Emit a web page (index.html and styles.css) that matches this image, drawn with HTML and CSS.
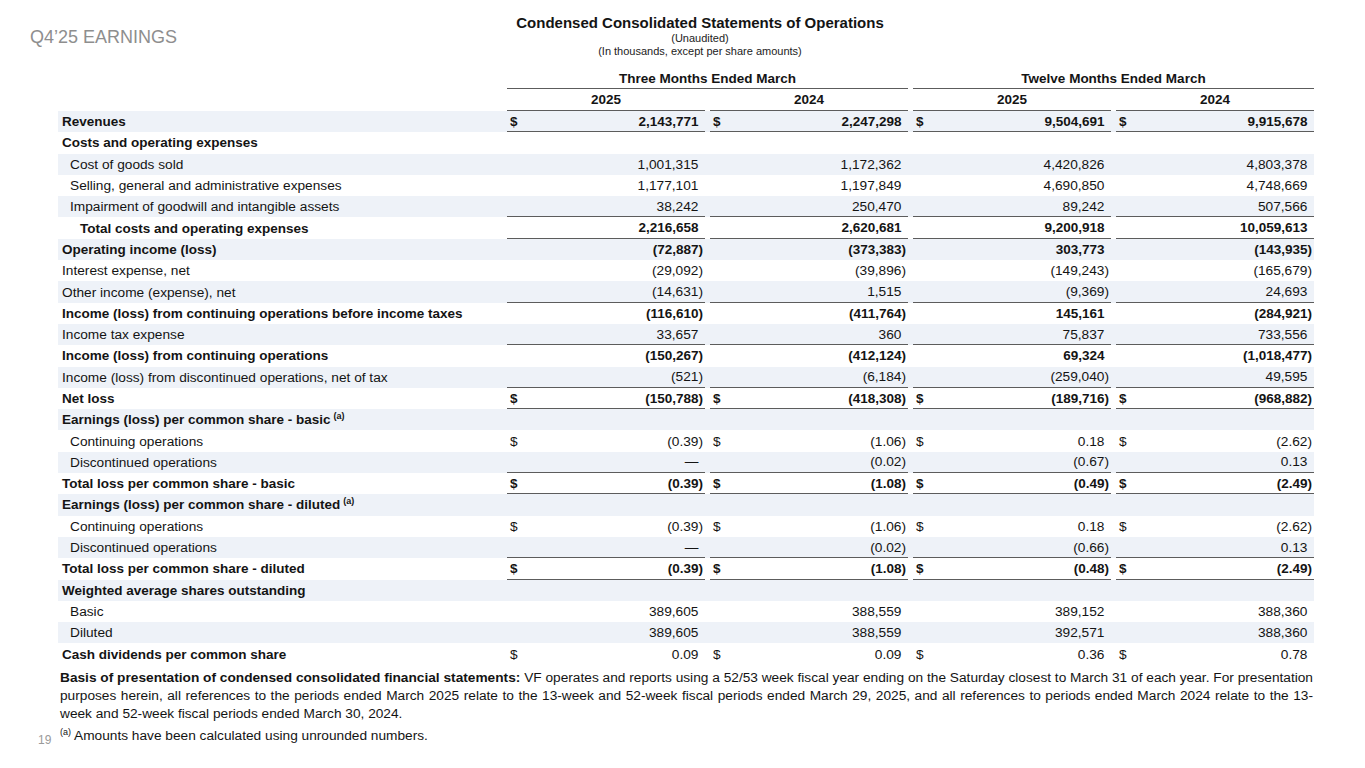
FILE: index.html
```html
<!DOCTYPE html>
<html lang="en">
<head>
<meta charset="utf-8">
<title>Q4'25 Earnings - Condensed Consolidated Statements of Operations</title>
<link rel="stylesheet" href="styles.css">
</head>
<body>
<div class="slide">
  <header class="top">
    <div class="brand">Q4’25 EARNINGS</div>
    <div class="titles">
      <div class="title">Condensed Consolidated Statements of Operations</div>
      <div class="sub">(Unaudited)</div>
      <div class="sub">(In thousands, except per share amounts)</div>
    </div>
    <div></div>
  </header>

  <section class="statement">
    <div class="ghead">
      <div></div>
      <div class="gcell">Three Months Ended March</div>
      <div class="gcell">Twelve Months Ended March</div>
    </div>
    <div class="yhead">
      <div></div>
      <div class="ycell">2025</div>
      <div class="ycell">2024</div>
      <div class="ycell">2025</div>
      <div class="ycell">2024</div>
    </div>

    <div class="row shade b">
      <div class="lab">Revenues</div>
      <div class="val rule"><span class="cur">$</span><span class="num pos">2,143,771</span></div>
      <div class="val rule"><span class="cur">$</span><span class="num pos">2,247,298</span></div>
      <div class="val rule"><span class="cur">$</span><span class="num pos">9,504,691</span></div>
      <div class="val rule"><span class="cur">$</span><span class="num pos">9,915,678</span></div>
    </div>
    <div class="row b">
      <div class="lab">Costs and operating expenses</div>
      <div class="val"></div><div class="val"></div><div class="val"></div><div class="val"></div>
    </div>
    <div class="row shade">
      <div class="lab i1">Cost of goods sold</div>
      <div class="val"><span class="num pos">1,001,315</span></div>
      <div class="val"><span class="num pos">1,172,362</span></div>
      <div class="val"><span class="num pos">4,420,826</span></div>
      <div class="val"><span class="num pos">4,803,378</span></div>
    </div>
    <div class="row">
      <div class="lab i1">Selling, general and administrative expenses</div>
      <div class="val"><span class="num pos">1,177,101</span></div>
      <div class="val"><span class="num pos">1,197,849</span></div>
      <div class="val"><span class="num pos">4,690,850</span></div>
      <div class="val"><span class="num pos">4,748,669</span></div>
    </div>
    <div class="row shade">
      <div class="lab i1">Impairment of goodwill and intangible assets</div>
      <div class="val rule"><span class="num pos">38,242</span></div>
      <div class="val rule"><span class="num pos">250,470</span></div>
      <div class="val rule"><span class="num pos">89,242</span></div>
      <div class="val rule"><span class="num pos">507,566</span></div>
    </div>
    <div class="row b">
      <div class="lab i2">Total costs and operating expenses</div>
      <div class="val rule"><span class="num pos">2,216,658</span></div>
      <div class="val rule"><span class="num pos">2,620,681</span></div>
      <div class="val rule"><span class="num pos">9,200,918</span></div>
      <div class="val rule"><span class="num pos">10,059,613</span></div>
    </div>
    <div class="row shade b">
      <div class="lab">Operating income (loss)</div>
      <div class="val"><span class="num">(72,887)</span></div>
      <div class="val"><span class="num">(373,383)</span></div>
      <div class="val"><span class="num pos">303,773</span></div>
      <div class="val"><span class="num">(143,935)</span></div>
    </div>
    <div class="row">
      <div class="lab">Interest expense, net</div>
      <div class="val"><span class="num">(29,092)</span></div>
      <div class="val"><span class="num">(39,896)</span></div>
      <div class="val"><span class="num">(149,243)</span></div>
      <div class="val"><span class="num">(165,679)</span></div>
    </div>
    <div class="row shade">
      <div class="lab">Other income (expense), net</div>
      <div class="val rule"><span class="num">(14,631)</span></div>
      <div class="val rule"><span class="num pos">1,515</span></div>
      <div class="val rule"><span class="num">(9,369)</span></div>
      <div class="val rule"><span class="num pos">24,693</span></div>
    </div>
    <div class="row b">
      <div class="lab">Income (loss) from continuing operations before income taxes</div>
      <div class="val"><span class="num">(116,610)</span></div>
      <div class="val"><span class="num">(411,764)</span></div>
      <div class="val"><span class="num pos">145,161</span></div>
      <div class="val"><span class="num">(284,921)</span></div>
    </div>
    <div class="row shade">
      <div class="lab">Income tax expense</div>
      <div class="val rule"><span class="num pos">33,657</span></div>
      <div class="val rule"><span class="num pos">360</span></div>
      <div class="val rule"><span class="num pos">75,837</span></div>
      <div class="val rule"><span class="num pos">733,556</span></div>
    </div>
    <div class="row b">
      <div class="lab">Income (loss) from continuing operations</div>
      <div class="val"><span class="num">(150,267)</span></div>
      <div class="val"><span class="num">(412,124)</span></div>
      <div class="val"><span class="num pos">69,324</span></div>
      <div class="val"><span class="num">(1,018,477)</span></div>
    </div>
    <div class="row shade">
      <div class="lab">Income (loss) from discontinued operations, net of tax</div>
      <div class="val rule"><span class="num">(521)</span></div>
      <div class="val rule"><span class="num">(6,184)</span></div>
      <div class="val rule"><span class="num">(259,040)</span></div>
      <div class="val rule"><span class="num pos">49,595</span></div>
    </div>
    <div class="row b">
      <div class="lab">Net loss</div>
      <div class="val rule"><span class="cur">$</span><span class="num">(150,788)</span></div>
      <div class="val rule"><span class="cur">$</span><span class="num">(418,308)</span></div>
      <div class="val rule"><span class="cur">$</span><span class="num">(189,716)</span></div>
      <div class="val rule"><span class="cur">$</span><span class="num">(968,882)</span></div>
    </div>
    <div class="row shade b">
      <div class="lab"><span>Earnings (loss) per common share - basic</span><sup class="fn">(a)</sup></div>
      <div class="val"></div><div class="val"></div><div class="val"></div><div class="val"></div>
    </div>
    <div class="row">
      <div class="lab i1">Continuing operations</div>
      <div class="val"><span class="cur">$</span><span class="num">(0.39)</span></div>
      <div class="val"><span class="cur">$</span><span class="num">(1.06)</span></div>
      <div class="val"><span class="cur">$</span><span class="num pos">0.18</span></div>
      <div class="val"><span class="cur">$</span><span class="num">(2.62)</span></div>
    </div>
    <div class="row shade">
      <div class="lab i1">Discontinued operations</div>
      <div class="val rule"><span class="num pos">—</span></div>
      <div class="val rule"><span class="num">(0.02)</span></div>
      <div class="val rule"><span class="num">(0.67)</span></div>
      <div class="val rule"><span class="num pos">0.13</span></div>
    </div>
    <div class="row b">
      <div class="lab">Total loss per common share - basic</div>
      <div class="val rule"><span class="cur">$</span><span class="num">(0.39)</span></div>
      <div class="val rule"><span class="cur">$</span><span class="num">(1.08)</span></div>
      <div class="val rule"><span class="cur">$</span><span class="num">(0.49)</span></div>
      <div class="val rule"><span class="cur">$</span><span class="num">(2.49)</span></div>
    </div>
    <div class="row shade b">
      <div class="lab"><span>Earnings (loss) per common share - diluted</span><sup class="fn">(a)</sup></div>
      <div class="val"></div><div class="val"></div><div class="val"></div><div class="val"></div>
    </div>
    <div class="row">
      <div class="lab i1">Continuing operations</div>
      <div class="val"><span class="cur">$</span><span class="num">(0.39)</span></div>
      <div class="val"><span class="cur">$</span><span class="num">(1.06)</span></div>
      <div class="val"><span class="cur">$</span><span class="num pos">0.18</span></div>
      <div class="val"><span class="cur">$</span><span class="num">(2.62)</span></div>
    </div>
    <div class="row shade">
      <div class="lab i1">Discontinued operations</div>
      <div class="val rule"><span class="num pos">—</span></div>
      <div class="val rule"><span class="num">(0.02)</span></div>
      <div class="val rule"><span class="num">(0.66)</span></div>
      <div class="val rule"><span class="num pos">0.13</span></div>
    </div>
    <div class="row b">
      <div class="lab">Total loss per common share - diluted</div>
      <div class="val rule"><span class="cur">$</span><span class="num">(0.39)</span></div>
      <div class="val rule"><span class="cur">$</span><span class="num">(1.08)</span></div>
      <div class="val rule"><span class="cur">$</span><span class="num">(0.48)</span></div>
      <div class="val rule"><span class="cur">$</span><span class="num">(2.49)</span></div>
    </div>
    <div class="row shade b">
      <div class="lab">Weighted average shares outstanding</div>
      <div class="val"></div><div class="val"></div><div class="val"></div><div class="val"></div>
    </div>
    <div class="row">
      <div class="lab i1">Basic</div>
      <div class="val"><span class="num pos">389,605</span></div>
      <div class="val"><span class="num pos">388,559</span></div>
      <div class="val"><span class="num pos">389,152</span></div>
      <div class="val"><span class="num pos">388,360</span></div>
    </div>
    <div class="row shade">
      <div class="lab i1">Diluted</div>
      <div class="val"><span class="num pos">389,605</span></div>
      <div class="val"><span class="num pos">388,559</span></div>
      <div class="val"><span class="num pos">392,571</span></div>
      <div class="val"><span class="num pos">388,360</span></div>
    </div>
    <div class="row">
      <div class="lab strong">Cash dividends per common share</div>
      <div class="val"><span class="cur">$</span><span class="num pos">0.09</span></div>
      <div class="val"><span class="cur">$</span><span class="num pos">0.09</span></div>
      <div class="val"><span class="cur">$</span><span class="num pos">0.36</span></div>
      <div class="val"><span class="cur">$</span><span class="num pos">0.78</span></div>
    </div>
  </section>

  <p class="basis">
    <span class="ln"><strong>Basis of presentation of condensed consolidated financial statements:</strong> VF operates and reports using a 52/53 week fiscal year ending on the Saturday closest to March 31 of each year. For presentation</span>
    <span class="ln">purposes herein, all references to the periods ended March 2025 relate to the 13-week and 52-week fiscal periods ended March 29, 2025, and all references to periods ended March 2024 relate to the 13-</span>
    <span class="ln last">week and 52-week fiscal periods ended March 30, 2024.</span>
  </p>

  <div class="foot">
    <span class="pageno">19</span>
    <p class="note"><sup class="fn">(a)</sup> Amounts have been calculated using unrounded numbers.</p>
  </div>
</div>
</body>
</html>
```

FILE: styles.css
```css
* { box-sizing: border-box; }

body {
  margin: 0;
  background: #ffffff;
  color: #141414;
  font-family: "Liberation Sans", Arial, sans-serif;
}

.slide {
  width: 1365px;
  height: 768px;
  overflow: hidden;
}

/* ---------- header ---------- */
.top {
  display: grid;
  grid-template-columns: 1fr auto 1fr;
  padding: 0 0 0 30px;
}

.brand {
  margin-top: 26px;
  font-size: 18px;
  line-height: 22px;
  color: #8e8e8e;
  white-space: nowrap;
}

.titles {
  padding: 14px 0 0 5px;
  text-align: center;
}

.title {
  font-size: 15px;
  line-height: 18px;
  font-weight: 700;
}

.sub {
  font-size: 11px;
  line-height: 13px;
  color: #222;
}

/* ---------- statement table ---------- */
.statement {
  margin: 10px 0 0 58px;
  width: 1256px;
  font-size: 13.7px;
}

.ghead {
  display: grid;
  grid-template-columns: 444px 1fr 1fr;
  column-gap: 5px;
  height: 21px;
  font-size: 13.5px;
}

.gcell {
  display: flex;
  align-items: center;
  justify-content: center;
  font-weight: 700;
  border-bottom: 1px solid #5c5c5c;
}

.yhead,
.row {
  display: grid;
  grid-template-columns: 444px repeat(4, 1fr);
  column-gap: 5px;
}

.yhead {
  height: 22px;
  font-size: 13.5px;
}

.ycell {
  display: flex;
  align-items: center;
  justify-content: center;
  font-weight: 700;
  border-bottom: 1px solid #5c5c5c;
}

.row {
  height: 21.3px;
}

.row.shade { background: #eef2f8; }

.row.b,
.lab.strong {
  font-weight: 700;
  font-size: 13.5px;
}

.lab {
  display: flex;
  align-items: center;
  padding-left: 4px;
  white-space: nowrap;
}

.lab.i1 { padding-left: 12px; }
.lab.i2 { padding-left: 22px; }

.lab .fn {
  align-self: flex-start;
  margin: 2px 0 0 3px;
  font-size: 9px;
  line-height: 11px;
  font-weight: 700;
}

.val {
  display: flex;
  align-items: center;
  padding: 0 2px 0 3px;
  white-space: nowrap;
}

.val.rule { border-bottom: 1px solid #5c5c5c; }

.num { margin-left: auto; }

.num.pos::after {
  content: ")";
  visibility: hidden;
}

/* ---------- notes ---------- */
.basis {
  margin: 4px 0 0 60px;
  width: 1253px;
  font-size: 13.7px;
  line-height: 18px;
}

.basis .ln {
  display: block;
  text-align: justify;
  text-align-last: justify;
  white-space: nowrap;
}

.basis .ln.last { text-align-last: left; }

.foot {
  display: flex;
  align-items: flex-start;
  margin-top: 4px;
  padding-left: 38px;
}

.pageno {
  width: 22px;
  margin-top: 6px;
  font-size: 12px;
  line-height: 14px;
  color: #9a9a9a;
}

.note {
  margin: 0;
  font-size: 13.7px;
  line-height: 18px;
}

.note .fn {
  font-size: 9px;
  vertical-align: 5px;
  line-height: 0;
}
```
